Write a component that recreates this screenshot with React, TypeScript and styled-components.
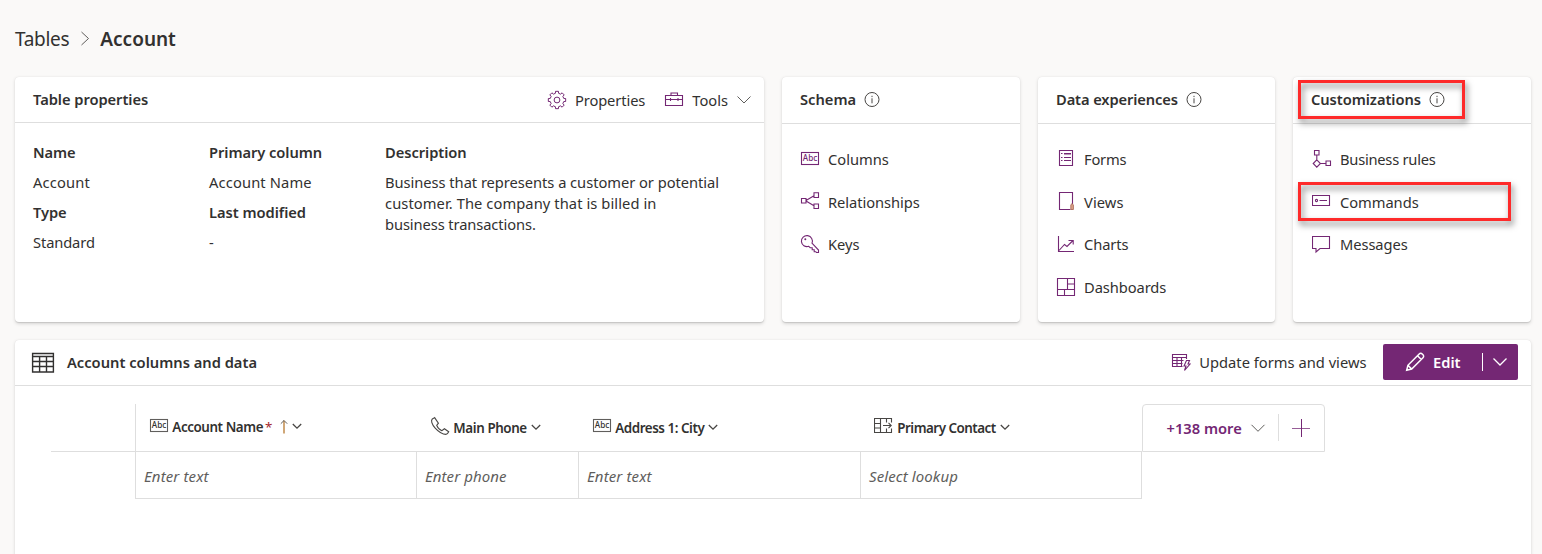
import React from "react";
import styled, { createGlobalStyle, css } from "styled-components";

const GlobalStyle = createGlobalStyle`
  *, *::before, *::after { box-sizing: border-box; }
  html, body { margin: 0; height: 554px; overflow: hidden; }
  body {
    background: #faf9f8;
    color: #323130;
    font-family: "Noto Sans", "Open Sans", sans-serif;
    font-size: 14.7px;
    line-height: 21px;
  }
`;

const PURPLE = "#742774";
const LINE = "#dedede";

/* ---------- text ---------- */

const Text = styled.span<{ $strong?: boolean; $track?: number }>`
  display: block;
  white-space: nowrap;
  font-weight: ${(p) => (p.$strong ? 560 : 380)};
  letter-spacing: ${(p) => p.$track ?? 0}px;
`;

/* ---------- layout ---------- */

const Page = styled.main`
  height: 554px;
  padding: 0 11px 0 15px;
  overflow: hidden;
`;

const Breadcrumb = styled.nav`
  display: flex;
  height: 77px;
  padding-top: 26px;
  font-size: 19px;
  line-height: 27px;
`;

const BreadcrumbChevron = styled.svg`
  margin: 5px 10.5px 0 10.5px;
`;

const CardRow = styled.div`
  display: grid;
  grid-template-columns: 749px 238px 237px 238px;
  column-gap: 18px;
  height: 245px;
`;

const Card = styled.section`
  background: #fff;
  border-radius: 4px;
  box-shadow: 0 1.6px 3.6px rgba(0, 0, 0, 0.132), 0 0.3px 0.9px rgba(0, 0, 0, 0.108);
`;

const CardHeader = styled.header<{ $height: number }>`
  display: flex;
  align-items: flex-start;
  height: ${(p) => p.$height}px;
  padding: 12px 12px 0 18px;
  border-bottom: 1px solid ${LINE};
`;

const HeaderActions = styled.div`
  display: flex;
  gap: 19px;
  margin-left: auto;
  padding-top: 1px;
`;

const PlainButton = styled.button`
  display: flex;
  gap: 8px;
  margin: 0;
  padding: 0;
  border: 0;
  background: none;
  color: inherit;
  font: inherit;
`;

const PropertyGrid = styled.div`
  display: grid;
  grid-template-columns: 176px 176px 350px;
  padding: 19px 18px 0;
`;

const PropertyColumn = styled.div`
  display: flex;
  flex-direction: column;
  gap: 9px;
`;

const InfoIcon = styled.svg`
  margin: 3px 0 0 8px;
`;

const LinkList = styled.ul<{ $indent: number }>`
  display: grid;
  grid-template-rows: 43px 42px 43px 43px;
  margin: 0;
  padding: 25px 0 0 ${(p) => p.$indent}px;
  list-style: none;
`;

const LinkItem = styled.li`
  display: flex;
  align-items: flex-start;
  gap: 8px;
  position: relative;
`;

const highlight = css`
  position: absolute;
  border: 3px solid #fe2a2a;
  filter: drop-shadow(2px 4px 3px rgba(0, 0, 0, 0.5));
  pointer-events: none;
`;

const HeaderAnchor = styled.div`
  display: flex;
  position: relative;
`;

const HeaderHighlight = styled.div`
  ${highlight}
  left: -13px;
  top: -9px;
  width: 167px;
  height: 39px;
`;

const ItemHighlight = styled.div`
  ${highlight}
  left: -14px;
  top: -10px;
  width: 213px;
  height: 39px;
`;

const DataCard = styled(Card)`
  margin-top: 18px;
  height: 240px;
`;

const DataHeader = styled.header`
  display: flex;
  align-items: flex-start;
  height: 46px;
  padding: 0 13px 0 16px;
  border-bottom: 1px solid ${LINE};
`;

const DataTitle = styled.div`
  display: flex;
  gap: 12px;
  padding-top: 12px;
`;

const UpdateButton = styled(PlainButton)`
  margin: 12px 16.5px 0 auto;
`;

const EditButton = styled.button`
  display: flex;
  align-items: center;
  width: 135px;
  height: 36px;
  margin: 4px 0 0;
  padding: 0 10px 0 22px;
  border: 0;
  border-radius: 2px;
  background: ${PURPLE};
  color: #fff;
  font: inherit;
`;

const EditLabel = styled(Text)`
  margin-left: 8px;
  font-weight: 600;
`;

const SplitLine = styled.i`
  width: 1px;
  height: 18px;
  margin: 0 9px 0 auto;
  background: #fff;
`;

/* ---------- grid ---------- */

const TableArea = styled.div`
  display: flex;
  padding: 18px 0 0 36px;
`;

const Table = styled.div`
  display: grid;
  grid-template-columns: 84px 281px 162px 282px 282px;
  grid-template-rows: 48px 47px;
`;

const HeadCell = styled.div<{ $first?: boolean; $shift?: number }>`
  display: flex;
  padding: ${(p) => 13 + (p.$shift ?? 0)}px 0 0 ${(p) => (p.$first ? 13 : 14)}px;
  border-bottom: 1px solid ${LINE};
  border-left: ${(p) => (p.$first ? `1px solid ${LINE}` : "0")};
  font-size: 13.4px;
  line-height: 20px;
`;

const CornerCell = styled.div`
  border-bottom: 1px solid ${LINE};
`;

const HeadIcon = styled.svg<{ $up?: number }>`
  flex: none;
  margin: ${(p) => -(p.$up ?? 1)}px 3.3px 0 0;
`;

const HeadChevron = styled.svg`
  margin: 6px 0 0 4px;
`;

const Required = styled.span`
  margin: 0 7px 0 2px;
  color: #a4262c;
`;

const SortArrow = styled.svg`
  margin-top: 2px;
`;

const BodyCell = styled.div`
  padding: 14px 0 0 8px;
  border-left: 1px solid ${LINE};
  border-bottom: 1px solid ${LINE};
  color: #605e5c;
  font-size: 15px;
  font-style: italic;
  &:last-child { border-right: 1px solid ${LINE}; }
`;

const MoreBox = styled.div`
  display: flex;
  width: 183px;
  height: 48px;
  border: 1px solid ${LINE};
  border-radius: 4px 4px 0 0;
  color: ${PURPLE};
`;

const MoreButton = styled.div`
  display: flex;
  width: 136px;
  height: 27px;
  margin-top: 9px;
  padding: 4px 0 0 23.5px;
  border-right: 1px solid ${LINE};
`;

const MoreChevron = styled.svg`
  margin: 6px 0 0 8.5px;
`;

const PlusIcon = styled.svg`
  margin: 13px 0 0 12px;
`;

/* ---------- icons ---------- */

const Svg = styled.svg`
  flex: none;
`;

const iconProps = {
  width: 20,
  height: 20,
  viewBox: "0 0 20 20",
  fill: "none",
  stroke: PURPLE,
  strokeWidth: 1.1,
};

const AbcShape = ({ color, edge }: { color: string; edge: string }) => (
  <>
    <rect x="1.5" y="3.5" width="17" height="12" stroke={edge} />
    <text x="10" y="12.4" textAnchor="middle" fontSize="8.2" fontWeight="500" fill={color} stroke="none">
      Abc
    </text>
  </>
);

const ColumnsIcon = () => (
  <Svg {...iconProps}>
    <AbcShape color={PURPLE} edge={PURPLE} />
  </Svg>
);

const RelationshipIcon = () => (
  <Svg {...iconProps}>
    <path d="M1.5 6.5H6V11H1.5zM14 .8h4.5v4.7H14zM14 12h4.5v4.5H14zM6 8.5L14 3.800M6 9L14 13.800" />
  </Svg>
);

const KeyIcon = () => (
  <Svg {...iconProps}>
    <path d="M12 9.200a5.500 5.500 0 1 0-3.300 3.100l1.500 1.400h2v2h2v2h1.500l.8.8h2v-2.500z" />
    <circle cx="5.300" cy="5.300" r="1" fill={PURPLE} stroke="none" />
  </Svg>
);

const FormsIcon = () => (
  <Svg {...iconProps}>
    <path d="M3.500 1.500h13v15h-13z" />
    <path d="M5 4.500h1.500M8 4.500h7M5 8.500h1.500M8 8.500h7M5 11.500h1.500M8 11.500h7" />
    <path d="M8 5.500h7" opacity=".5" />
  </Svg>
);

const ViewsIcon = () => (
  <Svg {...iconProps}>
    <path d="M14.500 17.500h-11v-17h13v11.500" />
    <path d="M14.800 13l1.200-1.500 1.400 1.500v4.500h-2.600z" fill="#dba58c" stroke="#a4604c" strokeWidth=".8" />
  </Svg>
);

const ChartsIcon = () => (
  <Svg {...iconProps}>
    <path d="M2.500 2v15.500H18M3 16.500L8.500 10.500l2.500 2L17 6.500M12.500 6.500h4.700v4" />
  </Svg>
);

const DashboardsIcon = () => (
  <Svg {...iconProps}>
    <path d="M1.500 1.500h17v17h-17zM11.500 1.500v11M1.500 12.500h17M11.500 7h7M8.500 12.500v6" />
  </Svg>
);

const RulesIcon = () => (
  <Svg {...iconProps}>
    <path d="M2.500 1.500H7V6H2.500zM4.800 6v4.500M4.800 10.900L8.400 14.500l-3.600 3.600L1.200 14.500zM8.400 14.500H14M14 12h4.500v4.500H14z" />
  </Svg>
);

const CommandsIcon = () => (
  <Svg {...iconProps}>
    <path d="M.5 3.500h17v10H.5zM7.500 8.500h7.500" />
    <circle cx="4.500" cy="8.500" r="1.100" />
  </Svg>
);

const MessagesIcon = () => (
  <Svg {...iconProps}>
    <path d="M.5 2.500h17v12H8l-4 3.500v-3.500H.5z" />
  </Svg>
);

const gearPath = (() => {
  const points: string[] = [];
  const teeth = 8;
  for (let i = 0; i < teeth; i++) {
    const base = (i * 2 * Math.PI) / teeth;
    [
      [-0.23, 6.9],
      [-0.17, 8.8],
      [0.17, 8.8],
      [0.23, 6.9],
    ].forEach(([a, r]) => {
      points.push(`${(10 + r * Math.sin(base + a)).toFixed(2)} ${(10 - r * Math.cos(base + a)).toFixed(2)}`);
    });
  }
  return `M${points.join("L")}Z`;
})();

const GearIcon = () => (
  <Svg {...iconProps} strokeWidth={1}>
    <path d={gearPath} />
    <circle cx="10" cy="10" r="2.900" />
  </Svg>
);

const ToolboxIcon = () => (
  <Svg {...iconProps}>
    <path d="M1.500 5.500h17v10h-17zM7 5.500v-2.500h6.500v2.500M1.500 9.500h4.500M6.500 9.500h7.500M14.500 9.500h4M6.500 8v3M14 8v3" />
  </Svg>
);

const GridIcon = () => (
  <Svg width="24" height="24" viewBox="0 0 24 24" fill="none" stroke="#323130" strokeWidth="1.400">
    <path d="M1.600 1.500h20.800v18.500H1.600zM1.600 4.500h20.800M1.600 9.500h20.800M1.600 14.500h20.800M8.600 4.500v15.500M15.500 4.500v15.500" />
  </Svg>
);

const UpdateIcon = () => (
  <Svg {...iconProps}>
    <path d="M11.500 14.500H1.500v-12h14v4.500M1.500 5.500h14M1.500 8.500h11M1.500 11.500h10M6 5.500v9M10.500 5.500v9" />
    <path d="M15.500 8.500h3l-1.500 3.500h2l-5.500 6.500 1.500-4.500h-2z" fill="#fff" />
  </Svg>
);

const PencilIcon = () => (
  <Svg {...iconProps} stroke="#fff" strokeWidth={1.5}>
    <path d="M1.700 18.300l1.200-5L14.200 2a2.100 2.100 0 0 1 3 0l.8.8a2.100 2.100 0 0 1 0 3L6.700 17.100zM12.500 3.700l3.800 3.800M2.900 13.300l3.800 3.800" />
  </Svg>
);

const Info = () => (
  <InfoIcon width="16" height="16" viewBox="0 0 16 16" fill="none" stroke="#484644">
    <circle cx="8" cy="7.500" r="7" />
    <path d="M8 6.300v5M8 3.800v1.300" />
  </InfoIcon>
);

const WideChevron = ({ color = "#605e5c", weight = 1 }: { color?: string; weight?: number }) => (
  <svg width="16" height="20" viewBox="0 0 16 20" fill="none" stroke={color} strokeWidth={weight}>
    <path d="M1.500 6.500L8 13l6.500-6.500" />
  </svg>
);

const SmallChevron = () => (
  <HeadChevron width="10" height="7" viewBox="0 0 10 7" fill="none" stroke="#484644" strokeWidth="1.300">
    <path d="M.8 1l4.200 4.200L9.200 1" />
  </HeadChevron>
);

const HeadAbcIcon = ({ up }: { up?: number }) => (
  <HeadIcon {...iconProps} $up={up}>
    <AbcShape color="#323130" edge="#605e5c" />
  </HeadIcon>
);

const PhoneIcon = () => (
  <HeadIcon {...iconProps} $up={2} stroke="#484644">
    <path d="M4.600 1.600L2.300 3c-1.600 1.300-.6 5.300 2.900 9.100 3.600 3.900 8.200 6.300 10.700 6.300 1.200 0 2.200-1.300 2.800-2.600l-4.300-3.100-2.500 2c-1.900-.7-4.300-3.100-5.200-5.300l1.700-2.200z" />
  </HeadIcon>
);

const LookupIcon = () => (
  <HeadIcon {...iconProps} $up={2} stroke="#484644">
    <path d="M17.500 6.500v-4h-17v14h17v-4M6.500 2.500v14M.5 7.500h6M.5 12h6M12.500 2.500v4M12.500 12.500v4M9 9.500h8M14.500 6.800l2.700 2.700-2.700 2.700" />
  </HeadIcon>
);

/* ---------- content ---------- */

type Link = { label: string; track: number; Icon: React.FC; marked?: boolean };

const schema: Link[] = [
  { label: "Columns", track: 0, Icon: ColumnsIcon },
  { label: "Relationships", track: -0.05, Icon: RelationshipIcon },
  { label: "Keys", track: 0, Icon: KeyIcon },
];

const experiences: Link[] = [
  { label: "Forms", track: -0.2, Icon: FormsIcon },
  { label: "Views", track: 0.08, Icon: ViewsIcon },
  { label: "Charts", track: -0.1, Icon: ChartsIcon },
  { label: "Dashboards", track: -0.08, Icon: DashboardsIcon },
];

const customizations: Link[] = [
  { label: "Business rules", track: -0.24, Icon: RulesIcon },
  { label: "Commands", track: -0.05, Icon: CommandsIcon, marked: true },
  { label: "Messages", track: -0.08, Icon: MessagesIcon },
];

const Links = ({ items, indent = 18 }: { items: Link[]; indent?: number }) => (
  <LinkList $indent={indent}>
    {items.map(({ label, track, Icon, marked }) => (
      <LinkItem key={label}>
        <Icon />
        <Text $track={track}>{label}</Text>
        {marked && <ItemHighlight />}
      </LinkItem>
    ))}
  </LinkList>
);

export default function App() {
  return (
    <Page>
      <GlobalStyle />
      <Breadcrumb>
        <Text $track={-0.3}>Tables</Text>
        <BreadcrumbChevron width="10" height="16" viewBox="0 0 10 16" fill="none" stroke="#605e5c">
          <path d="M1.500 1l7 6.500-7 6.500" />
        </BreadcrumbChevron>
        <Text $strong>Account</Text>
      </Breadcrumb>

      <CardRow>
        <Card>
          <CardHeader $height={46}>
            <Text $strong $track={-0.05}>Table properties</Text>
            <HeaderActions>
              <PlainButton>
                <GearIcon />
                <Text $track={-0.1}>Properties</Text>
              </PlainButton>
              <PlainButton>
                <ToolboxIcon />
                <Text>Tools</Text>
                <WideChevron />
              </PlainButton>
            </HeaderActions>
          </CardHeader>
          <PropertyGrid>
            <PropertyColumn>
              <Text $strong $track={-0.1}>Name</Text>
              <Text $track={0.18}>Account</Text>
              <Text $strong $track={-0.1}>Type</Text>
              <Text $track={-0.12}>Standard</Text>
            </PropertyColumn>
            <PropertyColumn>
              <Text $strong $track={-0.06}>Primary column</Text>
              <Text $track={0.14}>Account Name</Text>
              <Text $strong $track={-0.04}>Last modified</Text>
              <Text>-</Text>
            </PropertyColumn>
            <PropertyColumn>
              <Text $strong $track={-0.06}>Description</Text>
              <div>
                <Text $track={-0.04}>Business that represents a customer or potential</Text>
                <Text $track={0.08}>customer. The company that is billed in</Text>
                <Text $track={-0.1}>business transactions.</Text>
              </div>
            </PropertyColumn>
          </PropertyGrid>
        </Card>

        <Card>
          <CardHeader $height={47}>
            <Text $strong>Schema</Text>
            <Info />
          </CardHeader>
          <Links items={schema} />
        </Card>

        <Card>
          <CardHeader $height={47}>
            <Text $strong $track={-0.11}>Data experiences</Text>
            <Info />
          </CardHeader>
          <Links items={experiences} />
        </Card>

        <Card>
          <CardHeader $height={47}>
            <HeaderAnchor>
              <Text $strong $track={-0.06}>Customizations</Text>
              <Info />
              <HeaderHighlight />
            </HeaderAnchor>
          </CardHeader>
          <Links items={customizations} indent={19} />
        </Card>
      </CardRow>

      <DataCard>
        <DataHeader>
          <DataTitle>
            <GridIcon />
            <Text $strong>Account columns and data</Text>
          </DataTitle>
          <UpdateButton>
            <UpdateIcon />
            <Text $track={0.01}>Update forms and views</Text>
          </UpdateButton>
          <EditButton>
            <PencilIcon />
            <EditLabel $strong>Edit</EditLabel>
            <SplitLine />
            <WideChevron color="#fff" weight={1.3} />
          </EditButton>
        </DataHeader>

        <TableArea>
          <Table>
            <CornerCell />
            <HeadCell $first>
              <HeadAbcIcon />
              <Text $strong $track={-0.42}>Account Name</Text>
              <Required>*</Required>
              <SortArrow width="8" height="16" viewBox="0 0 8 16" fill="none" stroke="#605e5c">
                <path d="M4 1.500v13" stroke="#c08a4a" strokeWidth="1.500" />
                <path d="M.8 4.700L4 1.500l3.200 3.200" />
              </SortArrow>
              <SmallChevron />
            </HeadCell>
            <HeadCell $shift={1}>
              <PhoneIcon />
              <Text $strong $track={-0.4}>Main Phone</Text>
              <SmallChevron />
            </HeadCell>
            <HeadCell $shift={1}>
              <HeadAbcIcon up={2} />
              <Text $strong $track={-0.45}>Address 1: City</Text>
              <SmallChevron />
            </HeadCell>
            <HeadCell $shift={1}>
              <LookupIcon />
              <Text $strong $track={-0.5}>Primary Contact</Text>
              <SmallChevron />
            </HeadCell>
            <i />
            <BodyCell><Text $track={0.12}>Enter text</Text></BodyCell>
            <BodyCell><Text $track={0.08}>Enter phone</Text></BodyCell>
            <BodyCell><Text $track={0.12}>Enter text</Text></BodyCell>
            <BodyCell><Text $track={0.1}>Select lookup</Text></BodyCell>
          </Table>
          <MoreBox>
            <MoreButton>
              <Text $strong>+138 more</Text>
              <MoreChevron width="16" height="9" viewBox="0 0 16 9" fill="none" stroke="#605e5c">
                <path d="M1.500 .8L8 7.300 14.500 .8" />
              </MoreChevron>
            </MoreButton>
            <PlusIcon width="20" height="20" viewBox="0 0 20 20" fill="none" stroke={PURPLE}>
              <path d="M10.500 1v18" />
              <path d="M1 10.500h18" opacity=".75" />
            </PlusIcon>
          </MoreBox>
        </TableArea>
      </DataCard>
    </Page>
  );
}
